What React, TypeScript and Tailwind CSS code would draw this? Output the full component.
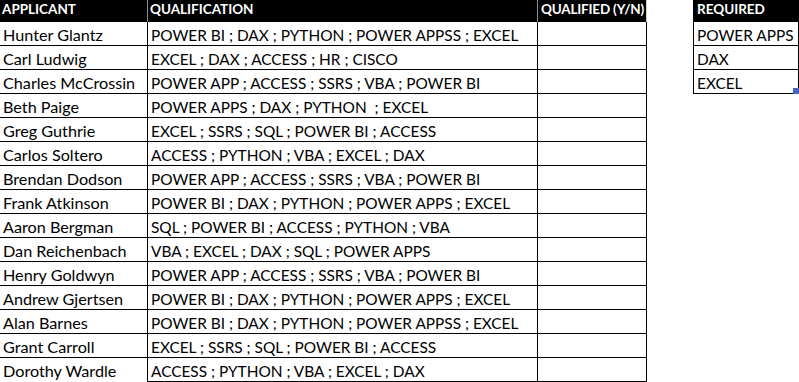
const applicants = [
  ["Hunter Glantz", "POWER BI ; DAX ; PYTHON ; POWER APPSS ; EXCEL"],
  ["Carl Ludwig", "EXCEL ; DAX ; ACCESS ; HR ; CISCO"],
  ["Charles McCrossin", "POWER APP ; ACCESS ; SSRS ; VBA ; POWER BI"],
  ["Beth Paige", "POWER APPS ; DAX ; PYTHON  ; EXCEL"],
  ["Greg Guthrie", "EXCEL ; SSRS ; SQL ; POWER BI ; ACCESS"],
  ["Carlos Soltero", "ACCESS ; PYTHON ; VBA ; EXCEL ; DAX"],
  ["Brendan Dodson", "POWER APP ; ACCESS ; SSRS ; VBA ; POWER BI"],
  ["Frank Atkinson", "POWER BI ; DAX ; PYTHON ; POWER APPS ; EXCEL"],
  ["Aaron Bergman", "SQL ; POWER BI ; ACCESS ; PYTHON ; VBA"],
  ["Dan Reichenbach", "VBA ; EXCEL ; DAX ; SQL ; POWER APPS"],
  ["Henry Goldwyn", "POWER APP ; ACCESS ; SSRS ; VBA ; POWER BI"],
  ["Andrew Gjertsen", "POWER BI ; DAX ; PYTHON ; POWER APPS ; EXCEL"],
  ["Alan Barnes", "POWER BI ; DAX ; PYTHON ; POWER APPSS ; EXCEL"],
  ["Grant Carroll", "EXCEL ; SSRS ; SQL ; POWER BI ; ACCESS"],
  ["Dorothy Wardle", "ACCESS ; PYTHON ; VBA ; EXCEL ; DAX"],
];

const required = ["POWER APPS", "DAX", "EXCEL"];

export default function App() {
  return (
    <div
      className="flex w-[799px] h-[382px] bg-white text-black overflow-hidden"
      style={{ fontFamily: "Lato, 'Open Sans', sans-serif" }}
    >
      {/* applicants sheet */}
      <div className="flex flex-col w-[647px]">
        <div className="flex h-[22px] bg-black text-white font-bold text-[13.5px] leading-[16px] whitespace-nowrap">
          <div className="w-[148px] border-r border-[#8c8c8c] pl-[2px] pt-[1px]">APPLICANT</div>
          <div className="w-[390px] border-r border-[#8c8c8c] pl-[2px] pt-[1px]">QUALIFICATION</div>
          <div className="w-[109px] border-r border-[#d0d0d0] pl-[3px] pt-[1px] tracking-[-0.2px]">QUALIFIED (Y/N)</div>
        </div>
        {applicants.map(([name, skills], i) => (
          <div key={name} className="flex h-[24px] text-[15.4px] leading-[18px]">
            <div
              className={
                "w-[148px] border-r border-black pl-[3px] pt-[4px] whitespace-pre text-[16.2px] " +
                (i < applicants.length - 1 ? "border-b" : "")
              }
            >
              {name}
            </div>
            <div className="w-[390px] border-r border-b border-black pl-[3px] pt-[4px] whitespace-pre">
              {skills}
            </div>
            <div className="w-[109px] border-r border-b border-black" />
          </div>
        ))}
      </div>

      {/* required list */}
      <div className="ml-[46px] flex flex-col w-[106px] self-start">
        <div className="h-[22px] bg-black text-white font-bold text-[13.5px] leading-[16px] pl-[4px] pt-[1px]">
          REQUIRED
        </div>
        {required.map((r, i) => (
          <div
            key={r}
            className="relative h-[24px] border-x border-b border-black text-[15.4px] leading-[18px] pl-[3px] pt-[4px] whitespace-nowrap"
          >
            {r}
            {i === required.length - 1 && (
              <span className="absolute right-[-1px] bottom-[-1px] w-[6px] h-[6px] bg-[#4a64c0]" />
            )}
          </div>
        ))}
      </div>
    </div>
  );
}
